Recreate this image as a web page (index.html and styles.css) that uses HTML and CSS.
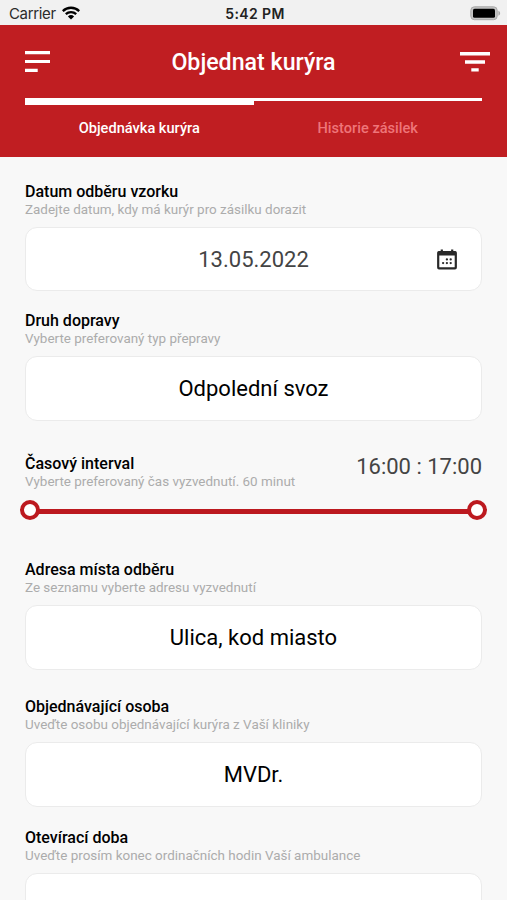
FILE: index.html
```html
<!DOCTYPE html>
<html lang="cs">
<head>
<meta charset="utf-8">
<title>Objednat kurýra</title>
<link rel="stylesheet" href="styles.css">
</head>
<body>
<div class="status">
  <div class="carrier"><span>Carrier</span>
    <svg width="18" height="14" viewBox="0 0 18 14"><g fill="none" stroke="#000" stroke-width="2.3"><path d="M.8 5.1a11.7 11.7 0 0 1 16.4 0"/><path d="M3.8 8.2a7.5 7.5 0 0 1 10.4 0"/></g><path d="M5.900 10.400a4.500 4.500 0 0 1 6.200 0L9 13.600z"/></svg>
  </div>
  <div class="clock">5:42 PM</div>
  <svg class="battery" width="31" height="15" viewBox="0 0 31 15"><rect x=".8" y=".8" width="26.4" height="12.9" rx="3.6" fill="#c4c4c4" stroke="#a9a9a9"/><path d="M28.400 4.800c2.300.8 2.300 4.200 0 5z" fill="#a9a9a9"/><rect x="3" y="2.8" width="22" height="9" rx="1.6"/></svg>
</div>
<header>
  <div class="bar">
    <svg class="menu" width="26" height="22" viewBox="0 0 26 22" fill="#fff"><path d="M0 0h25v3.200H0zM0 8.900h25v3.200H0zM0 17.800h12.700V21H0z"/></svg>
    <h1>Objednat kurýra</h1>
    <svg class="filter" width="30" height="21" viewBox="0 0 30 21" fill="#fff"><path d="M0 1h30v3.500H0zM5 9.300h20v3.400H5zM11.300 17.200h7.400v3.400h-7.400z"/></svg>
  </div>
  <nav>
    <div class="tab active"><span>Objednávka kurýra</span></div>
    <div class="tab"><span>Historie zásilek</span></div>
  </nav>
</header>
<main>
  <section class="field date">
    <h2>Datum odběru vzorku</h2>
    <p>Zadejte datum, kdy má kurýr pro zásilku dorazit</p>
    <div class="box"><span>13.05.2022</span>
      <svg class="calendar" width="20" height="21" viewBox="0 0 20 21"><rect x="1.2" y="3" width="17.600" height="16.300" rx=".8" fill="none" stroke="#292929" stroke-width="2.200"/><path fill="#292929" d="M1 2.500h18v4H1zM3.700.4h2.200v3H3.700zM14.100.4h2.200v3h-2.200z"/><g fill="#292929"><circle cx="9.900" cy="10.400" r="1.150"/><circle cx="13.700" cy="10.400" r="1.150"/><circle cx="6.100" cy="14.100" r="1.150"/><circle cx="9.900" cy="14.100" r="1.150"/><circle cx="13.700" cy="14.100" r="1.150"/></g></svg>
    </div>
  </section>
  <section class="field transport">
    <h2>Druh dopravy</h2>
    <p>Vyberte preferovaný typ přepravy</p>
    <div class="box"><span>Odpolední svoz</span></div>
  </section>
  <section class="interval">
    <div class="heading">
      <div><h2>Časový interval</h2><p>Vyberte preferovaný čas vyzvednutí. 60 minut</p></div>
      <div class="time">16:00 : 17:00</div>
    </div>
    <div class="slider"><i class="knob"></i><i class="track"></i><i class="knob"></i></div>
  </section>
  <section class="field address">
    <h2>Adresa místa odběru</h2>
    <p>Ze seznamu vyberte adresu vyzvednutí</p>
    <div class="box"><span>Ulica, kod miasto</span></div>
  </section>
  <section class="field person">
    <h2>Objednávající osoba</h2>
    <p>Uveďte osobu objednávající kurýra z Vaší kliniky</p>
    <div class="box"><span>MVDr.</span></div>
  </section>
  <section class="field">
    <h2>Otevírací doba</h2>
    <p>Uveďte prosím konec ordinačních hodin Vaší ambulance</p>
    <div class="box"></div>
  </section>
</main>
</body>
</html>
```
FILE: styles.css
```css
* { box-sizing: border-box; }
html, body { margin: 0; height: 900px; overflow: hidden; }
body { background: #f8f8f8; color: #000; font-family: Roboto, sans-serif; }
h1, h2, p { margin: 0; }
svg { display: block; flex: none; }
.status { height: 25px; display: grid; grid-template-columns: 1fr auto 1fr; align-items: center; padding: 2px 6px 0 9px; background: #f1f1f1; }
.carrier { display: flex; align-items: center; gap: 6px; font: 15px/20px Inter, sans-serif; letter-spacing: -.35px; color: #2b2b2b; }
.carrier svg { margin-top: -2px; }
.clock { font: 600 14px/20px Inter, sans-serif; letter-spacing: .4px; color: #222; }
.battery { justify-self: end; margin-top: -1px; }
header { height: 132px; padding: 0 25px; background: #c01e22; color: #fff; }
.bar { height: 73px; display: grid; grid-template-columns: 1fr auto 1fr; align-items: center; }
.bar h1 { font-size: 23.2px; line-height: 30px; font-weight: 500; }
.filter { justify-self: end; margin-right: -8px; }
nav { display: grid; grid-template-columns: 1fr 1fr; height: 59px; }
.tab { border-top: 3px solid #fff; color: #ee7579; text-align: center; font-size: 14.6px; font-weight: 500; line-height: 20px; padding-top: 17px; }
.tab.active { border-top-width: 7px; padding-top: 13px; color: #fff; }
main { padding: 24px 25px 0; }
h2 { font-size: 16px; line-height: 22px; font-weight: 500; }
p { font-size: 13.45px; line-height: 13px; color: #acacac; }
.box { height: 65px; margin-top: 11px; border: 1px solid #ebebeb; border-radius: 12px; background: #fff; display: grid; grid-template-columns: 1fr auto 1fr; align-items: center; font-size: 22px; line-height: 30px; }
.box span { grid-column: 2; }
.date .box { height: 64px; padding-top: 1px; color: #444; }
.calendar { grid-column: 3; justify-self: end; margin-right: 24px; }
.date { margin-bottom: 19px; }
.transport { margin-bottom: 32px; }
.heading { display: flex; justify-content: space-between; height: 37px; }
.time { font-size: 22px; line-height: 28px; color: #444; }
.interval { height: 106px; }
.slider { display: flex; align-items: center; margin: 10px -5px 0; }
.knob { width: 20px; height: 20px; border: 4px solid #bc191f; border-radius: 50%; background: #fff; }
.track { flex: 1; height: 5px; margin: 2px -1px 0; background: #bc191f; }
.address { margin-bottom: 26px; }
.person { margin-bottom: 20px; }
```
